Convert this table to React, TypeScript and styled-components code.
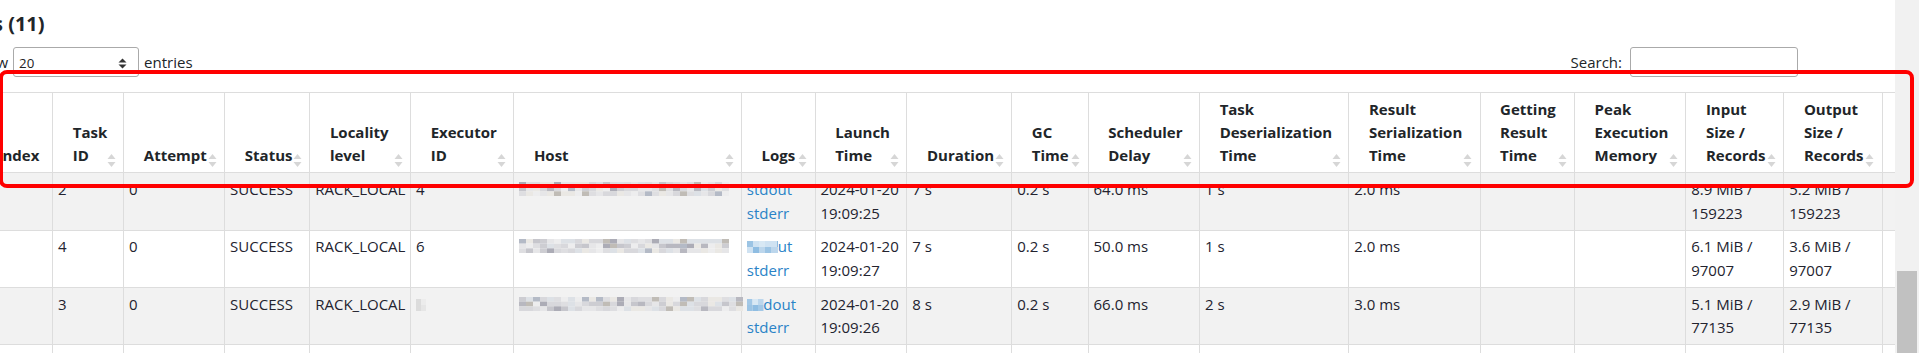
import styled, { createGlobalStyle } from 'styled-components';

// Spark UI stage page, task table scrolled sideways, with a red annotation box over the header

const GlobalStyle = createGlobalStyle`
  html, body {
    margin: 0;
    padding: 0;
    overflow: hidden;
    background: #ffffff;
  }
  body {
    font-family: "Open Sans", "Noto Sans", sans-serif;
    color: #212529;
  }
`;

const Screen = styled.div`
  position: relative;
  display: flex;
  width: 1919px;
  height: 353px;
  overflow: hidden;
`;

const Viewport = styled.div`
  flex: 1;
  min-width: 0;
  overflow: hidden;
`;

const Page = styled.div`
  width: 1828px;
  margin-left: -30px;
`;

const Heading = styled.h4`
  margin: 0 0 0 -23px;
  padding-top: 12px;
  font-size: 20px;
  font-weight: 700;
  line-height: 24px;
  white-space: nowrap;
`;

const ControlsRow = styled.div`
  display: flex;
  justify-content: space-between;
  align-items: center;
  height: 30px;
  margin-top: 11px;
  font-size: 15px;
  line-height: 23px;
`;

const LengthControl = styled.label`
  display: flex;
  align-items: center;
  gap: 5px;
`;

const FakeSelect = styled.div`
  box-sizing: border-box;
  display: flex;
  align-items: center;
  justify-content: space-between;
  width: 126px;
  height: 30px;
  padding: 3px 11px 0 5px;
  border: 1px solid #aaaaaa;
  border-radius: 3px;
  font-size: 13.3px;
  color: #222;
`;

const SearchControl = styled.label`
  display: flex;
  align-items: center;
  gap: 8px;
`;

const SearchInput = styled.div`
  box-sizing: border-box;
  width: 168px;
  height: 30px;
  border: 1px solid #aaaaaa;
  border-radius: 3px;
  background: #fff;
`;

const Table = styled.table`
  margin: 15px 0 0 7px;
  border-collapse: collapse;
  table-layout: fixed;
  font-size: 15px;
  line-height: 23.3px;
`;

const HeadCell = styled.th`
  position: relative;
  padding: 4.8px 28px 4.8px 19.5px;
  border: 1px solid #dddddd;
  vertical-align: bottom;
  text-align: left;
  font-weight: 700;
  color: #212529;
`;

const SortMark = styled.svg`
  position: absolute;
  right: 7.5px;
  bottom: 4px;
`;

const BodyRow = styled.tr<{ $striped: boolean }>`
  background: ${({ $striped }) => ($striped ? '#f2f2f2' : '#ffffff')};
`;

const Cell = styled.td`
  padding: 4.8px;
  border: 1px solid #dddddd;
  vertical-align: top;
  color: #23232f;
  overflow: visible;
  white-space: normal;
`;

const LogLink = styled.a`
  display: block;
  color: #2a83c7;
  text-decoration: none;
  white-space: nowrap;
`;

const Blur = styled.svg`
  display: inline-block;
  vertical-align: -1px;
  overflow: visible;
`;

const ScrollTrack = styled.div`
  width: 24px;
  height: 100%;
  padding-top: 271px;
  box-sizing: border-box;
  background: #f1f1f1;
  display: flex;
  justify-content: center;
`;

const ScrollThumb = styled.div`
  width: 19.5px;
  height: 100%;
  background: #c1c1c1;
`;

const Annotation = styled.div`
  position: absolute;
  left: -1.5px;
  top: 70px;
  width: 1915.5px;
  height: 117.5px;
  box-sizing: border-box;
  border: 4.8px solid #ff0000;
  border-radius: 8px;
  pointer-events: none;
`;

function SortIcon() {
  return (
    <SortMark width="9" height="15" viewBox="0 0 9 15">
      <path d="M0.5 6 L4.5 1 L8.5 6 Z" fill="#d6d6d6" />
      <path d="M0.5 9 L4.5 14 L8.5 9 Z" fill="#d6d6d6" />
    </SortMark>
  );
}

function SelectArrows() {
  return (
    <svg width="9" height="11" viewBox="0 0 9 11">
      <path d="M0.5 4.5 L4.5 0.5 L8.5 4.5 Z" fill="#333" />
      <path d="M0.5 6.5 L4.5 10.5 L8.5 6.5 Z" fill="#333" />
    </svg>
  );
}

// pixelated smear standing in for the redacted values
function seeded(seed: number) {
  let s = seed;
  return () => {
    s = (s * 16807) % 2147483647;
    return (s - 1) / 2147483646;
  };
}

const greyLight = ['#ededee', '#e6e6e8', '#dedee1', '#d8d8dc', '#eae8e4', '#dde1e6'];
const greyDark = ['#c6c6cc', '#b8b8c0', '#acacb6', '#c0bcb6', '#b4bac6', '#cdcdd2'];
const blueLight = ['#cfe2f2', '#bcd6ec', '#d8e8f4'];
const blueDark = ['#a3c8e6', '#8fbde2', '#9cc4e4', '#b0d0ea'];

function Mosaic({ seed, width, height, cell = 7, rows = 3, tone = 'grey' }: {
  seed: number; width: number; height: number; cell?: number; rows?: number; tone?: 'grey' | 'blue' | 'faint';
}) {
  const rnd = seeded(seed);
  const cols = Math.ceil(width / cell);
  const rh = height / rows;
  const rects = [];
  for (let c = 0; c < cols; c++) {
    for (let r = 0; r < rows; r++) {
      const mid = r === Math.floor(rows / 2);
      const dark = rnd() < (mid ? 0.42 : 0.14);
      let pal = dark ? greyDark : greyLight;
      if (tone === 'blue') pal = dark ? blueDark : blueLight;
      if (tone === 'faint') pal = ['#e6e6e6', '#dcdcdc', '#ececec', '#d6d6d6'];
      const fill = pal[Math.floor(rnd() * pal.length)];
      rects.push(
        <rect key={`${c}-${r}`} x={c * cell} y={r * rh} width={Math.min(cell, width - c * cell)} height={rh} fill={fill} />
      );
    }
  }
  return (
    <Blur width={width} height={height} viewBox={`0 0 ${width} ${height}`}>
      {rects}
    </Blur>
  );
}

const columns = [
  { title: 'Index', width: 75.3, sortable: false },
  { title: 'Task ID', width: 71, sortable: true },
  { title: 'Attempt', width: 101, sortable: true },
  { title: 'Status', width: 85.1, sortable: true },
  { title: 'Locality level', width: 100.8, sortable: true },
  { title: 'Executor ID', width: 103.2, sortable: true },
  { title: 'Host', width: 227.7, sortable: true },
  { title: 'Logs', width: 73.6, sortable: true },
  { title: 'Launch Time', width: 91.8, sortable: true },
  { title: 'Duration', width: 104.9, sortable: true },
  { title: 'GC Time', width: 76.4, sortable: true },
  { title: 'Scheduler Delay', width: 111.4, sortable: true },
  { title: 'Task Deserialization Time', width: 149.3, sortable: true },
  { title: 'Result Serialization Time', width: 131.2, sortable: true },
  { title: 'Getting Result Time', width: 94.5, sortable: true },
  { title: 'Peak Execution Memory', width: 111.3, sortable: true },
  { title: 'Input Size / Records', width: 98, sortable: true },
  { title: 'Output Size / Records', width: 98.2, sortable: true },
  { title: 'Shuffle Write Time', width: 110, sortable: true },
];

type Row = {
  index: string; taskId: string; executor: string | null; hostSeed: number; hostWidth: number;
  stdout: 'plain' | 'smearStdo' | 'smearSt'; launch: string; duration: string; gc: string;
  sched: string; deser: string; resultSer: string; input: string; output: string;
};

const rows: Row[] = [
  { index: '1', taskId: '2', executor: '4', hostSeed: 11, hostWidth: 210, stdout: 'plain', launch: '2024-01-20 19:09:25', duration: '7 s', gc: '0.2 s', sched: '64.0 ms', deser: '1 s', resultSer: '2.0 ms', input: '8.9 MiB / 159223', output: '5.2 MiB / 159223' },
  { index: '3', taskId: '4', executor: '6', hostSeed: 29, hostWidth: 210, stdout: 'smearStdo', launch: '2024-01-20 19:09:27', duration: '7 s', gc: '0.2 s', sched: '50.0 ms', deser: '1 s', resultSer: '2.0 ms', input: '6.1 MiB / 97007', output: '3.6 MiB / 97007' },
  { index: '2', taskId: '3', executor: null, hostSeed: 53, hostWidth: 224, stdout: 'smearSt', launch: '2024-01-20 19:09:26', duration: '8 s', gc: '0.2 s', sched: '66.0 ms', deser: '2 s', resultSer: '3.0 ms', input: '5.1 MiB / 77135', output: '2.9 MiB / 77135' },
  { index: '0', taskId: '1', executor: '2', hostSeed: 71, hostWidth: 210, stdout: 'plain', launch: '2024-01-20 19:09:24', duration: '9 s', gc: '0.3 s', sched: '58.0 ms', deser: '1 s', resultSer: '2.0 ms', input: '7.4 MiB / 130442', output: '4.3 MiB / 130442' },
];

function StdoutLink({ kind }: { kind: Row['stdout'] }) {
  if (kind === 'smearStdo') {
    return <LogLink><Mosaic seed={5} width={31} height={12} cell={6} rows={2} tone="blue" />ut</LogLink>;
  }
  if (kind === 'smearSt') {
    return <LogLink><Mosaic seed={8} width={16.5} height={12} cell={5.5} rows={2} tone="blue" />dout</LogLink>;
  }
  return <LogLink>stdout</LogLink>;
}

export default function App() {
  return (
    <>
      <GlobalStyle />
      <Screen>
        <Viewport>
          <Page>
            <Heading>Tasks (11)</Heading>
            <ControlsRow>
              <LengthControl>
                Show
                <FakeSelect>
                  <span>20</span>
                  <SelectArrows />
                </FakeSelect>
                entries
              </LengthControl>
              <SearchControl>
                Search:
                <SearchInput />
              </SearchControl>
            </ControlsRow>

            <Table style={{ width: columns.reduce((s, c) => s + c.width, 0) }}>
              <colgroup>
                {columns.map((c) => (
                  <col key={c.title} style={{ width: c.width }} />
                ))}
              </colgroup>
              <thead>
                <tr>
                  {columns.map((c) => (
                    <HeadCell key={c.title}>
                      {c.title}
                      {c.sortable && <SortIcon />}
                    </HeadCell>
                  ))}
                </tr>
              </thead>
              <tbody>
                {rows.map((r, i) => (
                  <BodyRow key={r.taskId} $striped={i % 2 === 0}>
                    <Cell>{r.index}</Cell>
                    <Cell>{r.taskId}</Cell>
                    <Cell>0</Cell>
                    <Cell>SUCCESS</Cell>
                    <Cell>RACK_LOCAL</Cell>
                    <Cell>
                      {r.executor ?? <Mosaic seed={3} width={10} height={12} cell={5} rows={2} tone="faint" />}
                    </Cell>
                    <Cell>
                      <Mosaic seed={r.hostSeed} width={r.hostWidth} height={14} />
                    </Cell>
                    <Cell>
                      <StdoutLink kind={r.stdout} />
                      <LogLink>stderr</LogLink>
                    </Cell>
                    <Cell>{r.launch}</Cell>
                    <Cell>{r.duration}</Cell>
                    <Cell>{r.gc}</Cell>
                    <Cell>{r.sched}</Cell>
                    <Cell>{r.deser}</Cell>
                    <Cell>{r.resultSer}</Cell>
                    <Cell></Cell>
                    <Cell></Cell>
                    <Cell>{r.input}</Cell>
                    <Cell>{r.output}</Cell>
                    <Cell></Cell>
                  </BodyRow>
                ))}
              </tbody>
            </Table>
          </Page>
        </Viewport>
        <ScrollTrack>
          <ScrollThumb />
        </ScrollTrack>
        <Annotation />
      </Screen>
    </>
  );
}
